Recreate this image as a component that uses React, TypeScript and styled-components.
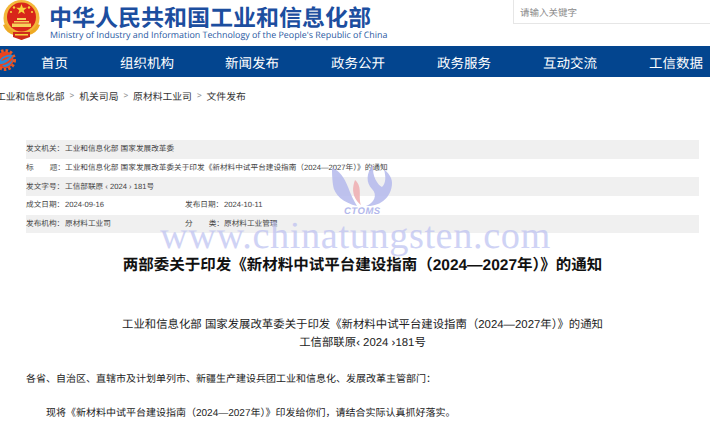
import React from "react";
import styled, { createGlobalStyle } from "styled-components";

const Global = createGlobalStyle`
  html, body { margin: 0; padding: 0; background: #fff; overflow: hidden; }
  body { width: 710px; height: 426px; font-family: "Liberation Sans", "Noto Sans CJK SC", sans-serif; text-rendering: geometricPrecision; }
`;
const Page = styled.div`position: relative; width: 710px; height: 426px; overflow: hidden;`;
const Header = styled.header`display: flex; height: 46px; padding-left: 3px; gap: 8px; align-items: flex-start;`;
const BrandText = styled.div`display: flex; flex-direction: column; width: 330px; padding-top: 3px;`;
const BrandCn = styled.div`font: 700 23px/26px "Noto Sans CJK SC", sans-serif; color: #1c4e9f; white-space: nowrap;`;
const BrandEn = styled.div`font: 400 8.9px/12px "Open Sans", sans-serif; color: #27589f; white-space: nowrap; margin-left: 1px;`;
const Search = styled.div`
  margin-left: auto; width: 197px; height: 24px; box-sizing: border-box; padding: 5px 0 0 6px;
  border-left: 1px solid #e6e6e6; border-bottom: 1px solid #e6e6e6;
  font: 400 9.5px/14px "Noto Sans CJK SC", sans-serif; color: #8a8a8a;
`;
const Nav = styled.nav`display: flex; height: 31px; background: #03458f; align-items: center; position: relative; padding-left: 41px;`;
const NavLogo = styled.svg`position: absolute; left: -6px; top: 3px;`;
const NavItem = styled.div<{ $w: number }>`
  width: ${p => p.$w}px; flex: none; color: #fff; white-space: nowrap;
  font: 400 13.5px/20px "Noto Sans CJK SC", sans-serif;
`;
const Crumbs = styled.div`display: flex; align-items: center; height: 14px; margin: 12px 0 0 -4px; gap: 4px; font: 400 9.8px/14px "Noto Sans CJK SC", sans-serif; color: #333; white-space: nowrap;`;
const Sep = styled.span`color: #888; font-size: 8px; margin: 0 1px; font-family: "Liberation Sans", sans-serif;`;
const Article = styled.main`width: 673px; margin: 37px 0 0 26px;`;
const MetaRow = styled.div<{ $shade?: boolean }>`
  display: flex; align-items: center; height: 18.7px; background: ${p => p.$shade ? "#f0f0f0" : "#fff"};
  font: 400 7.65px/12px "Liberation Sans", "Noto Sans CJK SC", sans-serif; color: #444; white-space: nowrap;
`;
const Label = styled.span`width: 39px; flex: none; display: flex; justify-content: space-between;`;
const Cell = styled.span`display: flex; width: 159px; flex: none;`;
const Heading = styled.h1`margin: 23px 0 0; text-align: center; font: 700 15.5px/20px "Liberation Sans", "Noto Sans CJK SC", sans-serif; color: #111; white-space: nowrap;`;
const Center = styled.div`text-align: center; font: 400 11.4px/18px "Liberation Sans", "Noto Sans CJK SC", sans-serif; color: #222; white-space: nowrap;`;
const CenterBlock = styled.div`margin-top: 40px;`;
const Para = styled.p<{ $indent?: number; $top: number }>`
  margin: ${p => p.$top}px 0 0 ${p => p.$indent ?? 0}px; font: 400 10px/18px "Liberation Sans", "Noto Sans CJK SC", sans-serif; color: #222; white-space: nowrap;
`;
const Watermark = styled.div`
  position: absolute; left: 160px; top: 213px; font: 400 38.3px/46px "Liberation Serif", serif; color: #bcc1f1; opacity: .7; letter-spacing: 0.6px; white-space: nowrap; pointer-events: none;
`;
const Logo = styled.svg`position: absolute; left: 330px; top: 163px; pointer-events: none;`;
const LogoText = styled.text`font: italic 700 9.5px "Liberation Sans", sans-serif; letter-spacing: .5px;`;

const Emblem = () => (
  <svg width="38" height="41" viewBox="0 0 38 41">
    <circle cx="18.5" cy="18" r="18" fill="#f3b73a" />
    <circle cx="18.5" cy="17" r="14.5" fill="#d8261a" />
    <path d="M18.5 4l1.4 3.8h4l-3.2 2.4 1.2 3.8-3.4-2.3-3.4 2.3 1.2-3.8-3.2-2.4h4z" fill="#f8d23c" />
    <circle cx="11" cy="7.5" r="1.2" fill="#f8d23c" /><circle cx="26" cy="7.5" r="1.2" fill="#f8d23c" />
    <circle cx="8" cy="12" r="1.1" fill="#f8d23c" /><circle cx="29" cy="12" r="1.1" fill="#f8d23c" />
    <path d="M14 18h9v2h-9zM11 21h15v1.5H11zM9 23.5h19V27H9z" fill="#f6d35a" />
    <path d="M0 25q3 8 11 10l7.5 5 7.5-5q8-2 11-10l-3-1q-4 7-10 8H13q-6-1-10-8z" fill="#eeaa24" />
    <path d="M10 32h17v5l-8.500 3-8.500-3z" fill="#cf2a1c" />
    <path d="M12 34h13v1.500H12z" fill="#f8d23c" />
  </svg>
);

const navItems: [string, number][] = [["首页", 79], ["组织机构", 105], ["新闻发布", 106], ["政务公开", 106], ["政务服务", 106], ["互动交流", 106], ["工信数据", 61]];

export default function App() {
  return (
    <Page>
      <Global />
      <Header>
        <Emblem />
        <BrandText>
          <BrandCn>中华人民共和国工业和信息化部</BrandCn>
          <BrandEn>Ministry of Industry and Information Technology of the People's Republic of China</BrandEn>
        </BrandText>
        <Search>请输入关键字</Search>
      </Header>
      <Nav>
        <NavLogo width="22" height="22" viewBox="0 0 22 22">
          <circle cx="11" cy="11" r="8.5" fill="#e8431f" />
          <circle cx="11" cy="11" r="9.500" fill="none" stroke="#ea5a24" strokeWidth="3" strokeDasharray="2.500 2" />
          <path d="M4 14c3-7 9-9 15-8-2 4-6 8-11 9-2 .4-3 0-4-1z" fill="#2a8ad6" />
          <path d="M7 12c2-3 5-4 9-4.500-2 2-5 4-9 4.500z" fill="#e8431f" />
          <path d="M8 16c4 0 8-2 11-6-1 5-5 8-8 8-1 0-2-1-3-2z" fill="#2a8ad6" />
        </NavLogo>
        {navItems.map(([t, w]) => <NavItem key={t} $w={w}>{t}</NavItem>)}
      </Nav>
      <Crumbs>
        <span>工业和信息化部</span><Sep>&gt;</Sep><span>机关司局</span><Sep>&gt;</Sep><span>原材料工业司</span><Sep>&gt;</Sep><span>文件发布</span>
      </Crumbs>
      <Article>
        <MetaRow $shade><Label>发文机关：</Label><span>工业和信息化部 国家发展改革委</span></MetaRow>
        <MetaRow><Label><span>标</span><span>题：</span></Label><span>工业和信息化部 国家发展改革委关于印发《新材料中试平台建设指南（2024—2027年）》的通知</span></MetaRow>
        <MetaRow $shade><Label>发文字号：</Label><span>工信部联原 ‹ 2024 › 181号</span></MetaRow>
        <MetaRow><Cell><Label>成文日期：</Label><span>2024-09-16</span></Cell><Label>发布日期：</Label><span>2024-10-11</span></MetaRow>
        <MetaRow $shade><Cell><Label>发布机构：</Label><span>原材料工业司</span></Cell><Label><span>分</span><span>类：</span></Label><span>原材料工业管理</span></MetaRow>
        <Heading>两部委关于印发《新材料中试平台建设指南（2024—2027年）》的通知</Heading>
        <CenterBlock>
          <Center>工业和信息化部 国家发展改革委关于印发《新材料中试平台建设指南（2024—2027年）》的通知</Center>
          <Center>工信部联原‹ 2024 ›181号</Center>
        </CenterBlock>
        <Para $top={19}>各省、自治区、直辖市及计划单列市、新疆生产建设兵团工业和信息化、发展改革主管部门：</Para>
        <Para $top={16} $indent={20}>现将《新材料中试平台建设指南（2024—2027年）》印发给你们，请结合实际认真抓好落实。</Para>
      </Article>
      <Watermark>www.chinatungsten.com</Watermark>
      <Logo width="64" height="54" viewBox="0 0 64 54">
        <path d="M2 5C10 8 14 14 18 24c3 8 6 14 9 19C14 40 4 32 3 22 2 15 2 10 2 5z" fill="#b4b9ec" opacity=".85" />
        <path d="M25 17c8 7 3 17 6 25-5-4-11-12-6-25z" fill="#eeb0b4" opacity=".9" />
        <path d="M43 2c-7 8-7 18-1 24 6 6 2 14-6 17 14 1 26-9 26-23 0-6-4-10-8-14 2 8 2 14-2 18-4-2-10-10-9-22z" fill="#b4b9ec" opacity=".85" />
        <LogoText x="14" y="51" fill="#b4b9ec">CTOMS</LogoText>
      </Logo>
    </Page>
  );
}
